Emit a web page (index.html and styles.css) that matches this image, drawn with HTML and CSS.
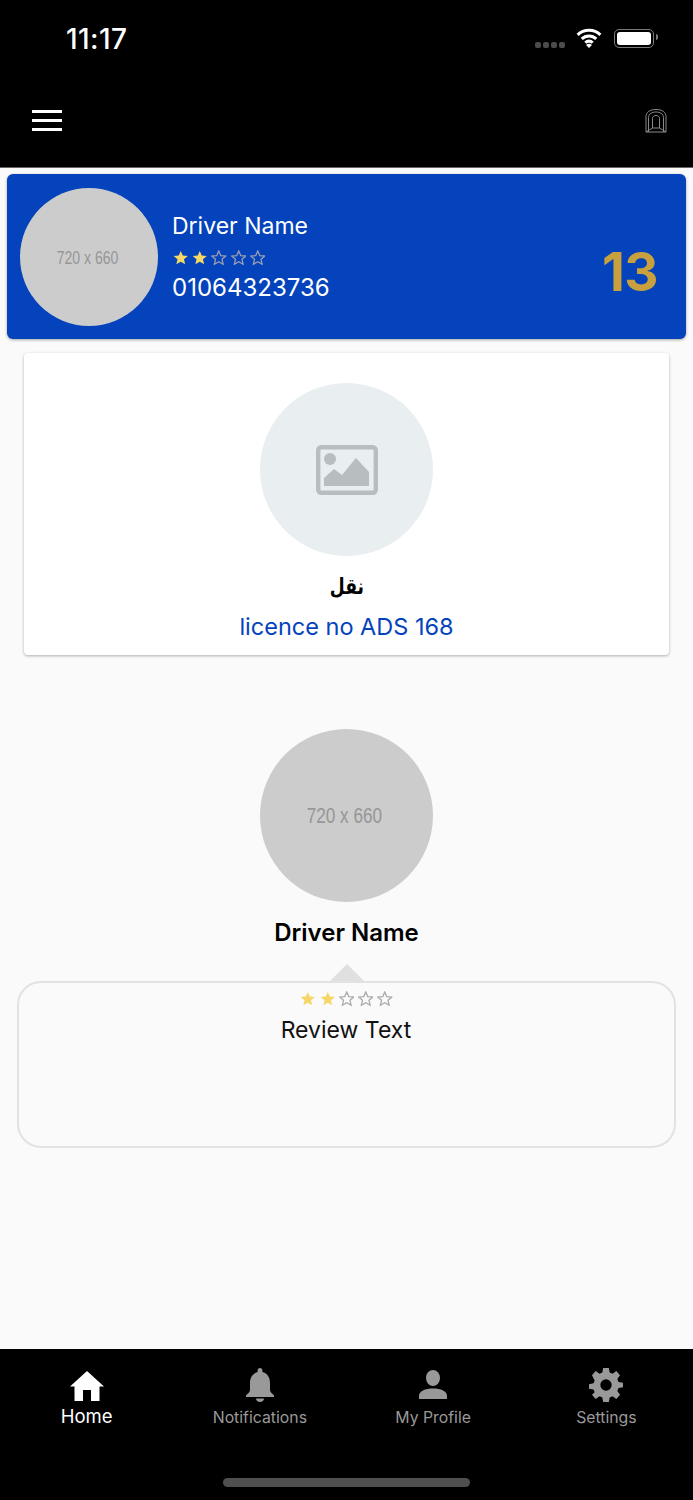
FILE: index.html

```html
<!DOCTYPE html>
<html lang="en">
<head>
  <meta charset="UTF-8">
  <title>Driver Details</title>
  <link rel="stylesheet" href="styles.css">
</head>
<body>
  <svg class="defs" width="0" height="0">
    <symbol id="star" viewBox="0 0 24 24">
      <path d="M12 1.500l3.100 7.100 7.900.7-6 5.100 1.800 7.700-6.800-4-6.800 4 1.800-7.700-6-5.100 7.900-.7z"/>
    </symbol>
  </svg>

  <div class="page">
    <header class="top">
      <div class="status-bar">
        <span class="time">11:17</span>
        <div class="status-icons">
          <div class="signal"><i></i><i></i><i></i><i></i></div>
          <svg class="wifi" width="26" height="20" viewBox="0 0 28 22">
            <path d="M1.500 7.500a18 18 0 0 1 25 0M6 12a11.500 11.500 0 0 1 16 0M10 16.200a5.500 5.500 0 0 1 8 0" fill="none" stroke="#fff" stroke-width="3.400"/>
            <path d="M14 22l-3.200-3.400a4.500 4.500 0 0 1 6.400 0z" fill="#fff"/>
          </svg>
          <div class="battery"><div class="battery-fill"></div></div>
        </div>
      </div>
      <div class="app-bar">
        <div class="menu"><i></i><i></i><i></i></div>
        <svg class="gate" width="24" height="26" viewBox="0 0 24 26" fill="none" stroke="#8a8a8a" stroke-width="1">
          <path d="M2 24V8.500C2 4 6 1.500 12 1.500S22 4 22 8.500V24z"/>
          <path d="M4.500 24V9.500C4.500 6 8 4 12 4s7.500 2 7.500 5.500V24"/>
          <path d="M8.500 20V10.500C8.500 8.500 10 7.500 12 7.500s3.500 1 3.500 3V20z"/>
          <path d="M2 24l6.500-4M22 24l-6.500-4"/>
        </svg>
      </div>
    </header>

    <main class="content">
      <section class="driver-card">
        <div class="placeholder small"><span>720 x 660</span></div>
        <div class="driver-info">
          <div class="driver-name">Driver Name</div>
          <div class="stars">
            <svg class="star on"><use href="#star"/></svg>
            <svg class="star on"><use href="#star"/></svg>
            <svg class="star off"><use href="#star"/></svg>
            <svg class="star off"><use href="#star"/></svg>
            <svg class="star off"><use href="#star"/></svg>
          </div>
          <div class="driver-phone">01064323736</div>
        </div>
        <div class="driver-count">13</div>
      </section>

      <section class="vehicle-card">
        <div class="vehicle-photo">
          <svg width="62" height="50" viewBox="0 0 62 50">
            <rect x="2.200" y="2.200" width="57.600" height="45.600" rx="3" fill="none" stroke="#b8bdbf" stroke-width="4.400"/>
            <circle cx="14" cy="14" r="6" fill="#b8bdbf"/>
            <path d="M8 41V33l10-9 8 6 14-17 13 14v14z" fill="#b8bdbf"/>
          </svg>
        </div>
        <div class="vehicle-type" lang="ar">نقل</div>
        <div class="vehicle-licence">licence no ADS 168</div>
      </section>

      <section class="review">
        <div class="placeholder large"><span>720 x 660</span></div>
        <div class="review-name">Driver Name</div>
        <div class="review-arrow"></div>
        <div class="review-box">
          <div class="stars light">
            <svg class="star on"><use href="#star"/></svg>
            <svg class="star on"><use href="#star"/></svg>
            <svg class="star off"><use href="#star"/></svg>
            <svg class="star off"><use href="#star"/></svg>
            <svg class="star off"><use href="#star"/></svg>
          </div>
          <div class="review-text">Review Text</div>
        </div>
      </section>
    </main>

    <nav class="tabs">
      <div class="tab-row">
        <div class="tab active">
          <svg width="36" height="32" viewBox="0 0 36 32" fill="#fff">
            <path d="M18 1L1 16.500h4.500V31H14V20h8v11h8.500V16.500H35z"/>
          </svg>
          <span>Home</span>
        </div>
        <div class="tab">
          <svg width="30" height="34" viewBox="0 0 30 34" fill="#999">
            <path d="M15 0c1.500 0 2.400 1 2.400 2.600v1.500C22.500 5.400 25 9.500 25 15v7c0 2 2 3.500 4 5.500V29H1v-1.500C3 25.500 5 24 5 22v-7C5 9.500 7.500 5.400 12.600 4.100V2.600C12.600 1 13.500 0 15 0z"/>
            <path d="M11 30.500h8c0 2-1.800 3.500-4 3.500s-4-1.500-4-3.500z"/>
          </svg>
          <span>Notifications</span>
        </div>
        <div class="tab">
          <svg width="30" height="34" viewBox="0 0 30 34" fill="#999">
            <ellipse cx="15" cy="10" rx="7" ry="8"/>
            <path d="M1 31v-3c0-5 6-7.500 14-7.500S29 23 29 28v3z"/>
          </svg>
          <span>My Profile</span>
        </div>
        <div class="tab">
          <svg width="34" height="34" viewBox="0 0 24 24" fill="#999">
            <path fill-rule="evenodd" d="M10 0h4l.6 3.200 2 .8L19.300 2.200l2.600 3-1.900 2.600.8 2 3.200.6v3.200l-3.200.6-.8 2 1.900 2.600-2.600 3-2.700-1.800-2 .8L14 24h-4l-.6-3.200-2-.8-2.700 1.800-2.600-3L4 17.200l-.8-2L0 14.600v-3.200l3.200-.6.8-2L2.100 5.200l2.600-3L7.400 4l2-.8zM12 8a4 4 0 1 0 0 8 4 4 0 0 0 0-8z"/>
          </svg>
          <span>Settings</span>
        </div>
      </div>
      <div class="home-bar"></div>
    </nav>
  </div>
</body>
</html>
```

FILE: styles.css

```css
body {
  margin: 0;
  font-family: Inter, "Noto Sans", sans-serif;
  background: #fafafa;
}

.defs {
  display: block;
}

.page {
  height: 1500px;
  display: flex;
  flex-direction: column;
  overflow: hidden;
}

/* top black area */
.top {
  height: 168px;
  flex: none;
  background: #000;
  color: #fff;
  box-sizing: border-box;
  border-bottom: 1px solid #666;
}

.status-bar {
  height: 76px;
  display: flex;
  align-items: center;
  justify-content: space-between;
  padding: 0 39px 0 66px;
}

.time {
  margin-top: 1px;
  font-size: 28px;
  font-weight: 500;
  letter-spacing: 0.4px;
}

.status-icons {
  display: flex;
  align-items: center;
  gap: 12px;
}

.signal {
  display: flex;
  gap: 2px;
  margin-top: 14px;
  margin-right: -1px;
}

.signal i {
  width: 6px;
  height: 6px;
  border-radius: 2px;
  background: #4c4c4c;
}

.wifi {
  margin-bottom: 1px;
}

.battery {
  width: 34px;
  height: 13px;
  padding: 2px;
  border: 1.500px solid #7a7a7a;
  border-radius: 5px;
  position: relative;
}

.battery::after {
  content: "";
  position: absolute;
  right: -5px;
  top: 4px;
  width: 2px;
  height: 6px;
  background: #7a7a7a;
  border-radius: 0 2px 2px 0;
}

.battery-fill {
  height: 100%;
  background: #fff;
  border-radius: 3px;
}

.app-bar {
  height: 90px;
  display: flex;
  align-items: center;
  justify-content: space-between;
  padding: 0 25px 0 32px;
}

.menu {
  display: flex;
  flex-direction: column;
  gap: 6px;
  margin-top: -1px;
}

.menu i {
  display: block;
  width: 30px;
  height: 3px;
  background: #fff;
}

/* content */
.content {
  flex: 1;
}

.driver-card {
  margin: 6px 7px 0;
  height: 165px;
  box-sizing: border-box;
  padding: 0 28px 0 13px;
  display: flex;
  align-items: center;
  background: #0443bb;
  border-radius: 6px;
  box-shadow: 0 1px 3px rgba(0, 0, 0, 0.35);
  color: #fff;
}

.placeholder {
  flex: none;
  display: flex;
  align-items: center;
  justify-content: center;
  border-radius: 50%;
  background: #cccccc;
  color: #969696;
  font-family: "Liberation Sans", sans-serif;
  white-space: nowrap;
}

.placeholder span {
  display: inline-block;
  transform: scaleX(0.78);
}

.placeholder.small {
  width: 138px;
  height: 138px;
  font-size: 18px;
  margin-top: 1px;
  padding: 2px 3px 0 0;
  box-sizing: border-box;
}

.placeholder.large {
  width: 173px;
  height: 173px;
  font-size: 22px;
  padding-right: 5px;
  box-sizing: border-box;
}

.driver-info {
  margin-left: 14px;
}

.driver-name {
  font-size: 23px;
  line-height: 30px;
}

.driver-phone {
  font-size: 24px;
  line-height: 30px;
}

.stars {
  display: flex;
  gap: 3.700px;
  height: 24px;
  align-items: center;
  margin: 5px 0 3px;
  padding-left: 1px;
}

.star {
  width: 15.500px;
  height: 15.500px;
}

.star.on {
  fill: #f6d665;
}

.star.off {
  fill: none;
  stroke: #9a9fb0;
  stroke-width: 2;
}

.stars.light {
  margin: 0;
  padding-left: 0;
  justify-content: center;
}

.stars.light .star.off {
  stroke: #aaa;
}

.driver-count {
  margin-left: auto;
  margin-top: 30px;
  font-size: 53px;
  font-weight: 700;
  letter-spacing: -0.5px;
  color: #c8a13e;
}

.vehicle-card {
  margin: 14px 24px 0;
  height: 302px;
  box-sizing: border-box;
  padding-top: 30px;
  display: flex;
  flex-direction: column;
  align-items: center;
  background: #fff;
  border-radius: 4px;
  box-shadow: 0 1px 3px rgba(0, 0, 0, 0.3);
}

.vehicle-photo {
  width: 173px;
  height: 173px;
  display: flex;
  align-items: center;
  justify-content: center;
  border-radius: 50%;
  background: #e9eef0;
}

.vehicle-type {
  margin-top: 15px;
  font-family: "DejaVu Sans", sans-serif;
  font-size: 22px;
  font-weight: 700;
  line-height: 32px;
  color: #000;
  transform: scaleX(0.78);
}

.vehicle-licence {
  margin-top: 9px;
  font-size: 23.500px;
  line-height: 30px;
  color: #0443bb;
}

.review {
  margin-top: 74px;
  display: flex;
  flex-direction: column;
  align-items: center;
}

.review-name {
  margin-top: 16px;
  font-size: 24px;
  font-weight: 600;
  line-height: 30px;
  color: #000;
}

.review-arrow {
  margin-top: 16px;
  width: 0;
  height: 0;
  border-left: 17px solid transparent;
  border-right: 17px solid transparent;
  border-bottom: 17px solid #e0e0e0;
}

.review-box {
  width: 659px;
  height: 167px;
  box-sizing: border-box;
  padding-top: 4px;
  border: 2px solid #e2e2e2;
  border-radius: 24px;
  text-align: center;
}

.review-text {
  margin-top: 4px;
  padding-right: 1px;
  font-size: 23px;
  line-height: 30px;
  color: #111;
}

/* bottom tabs */
.tabs {
  height: 151px;
  flex: none;
  background: #000;
  position: relative;
}

.tab-row {
  display: grid;
  grid-template-columns: repeat(4, 1fr);
  padding-top: 19px;
}

.tab {
  display: flex;
  flex-direction: column;
  align-items: center;
  color: #999;
  font-size: 15.800px;
  line-height: 24px;
}

.tab span {
  margin-top: 4px;
}

.tab.active {
  color: #fff;
  font-size: 18.500px;
}

.tab.active svg {
  margin-top: 2px;
}

.tab.active span {
  margin-top: 2px;
}

.home-bar {
  position: absolute;
  left: 223px;
  bottom: 13px;
  width: 247px;
  height: 9px;
  border-radius: 5px;
  background: #4f4f4f;
}
```
